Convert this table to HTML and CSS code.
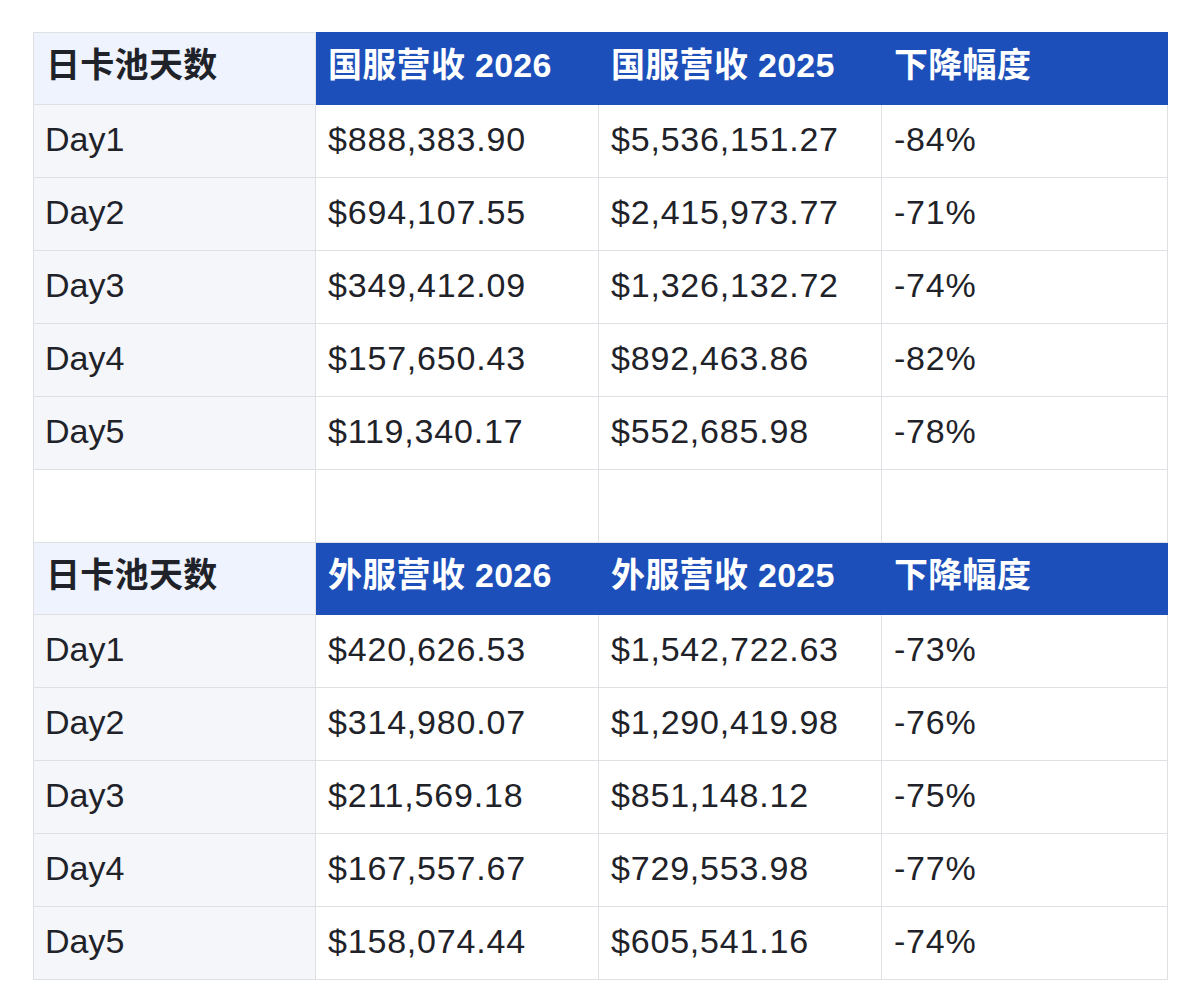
FILE: index.html
```html
<!DOCTYPE html>
<html lang="zh-CN">
<head>
<meta charset="utf-8">
<title>日卡池营收对比</title>
<link rel="stylesheet" href="styles.css">
</head>
<body>
<div class="page">
<table class="rev">
  <colgroup>
    <col class="c1"><col class="c2"><col class="c3"><col class="c4">
  </colgroup>
  <tbody>
    <tr class="head">
      <th class="first">日卡池天数</th><th>国服营收 2026</th><th>国服营收 2025</th><th>下降幅度</th>
    </tr>
    <tr><td class="first">Day1</td><td>$888,383.90</td><td>$5,536,151.27</td><td>-84%</td></tr>
    <tr><td class="first">Day2</td><td>$694,107.55</td><td>$2,415,973.77</td><td>-71%</td></tr>
    <tr><td class="first">Day3</td><td>$349,412.09</td><td>$1,326,132.72</td><td>-74%</td></tr>
    <tr><td class="first">Day4</td><td>$157,650.43</td><td>$892,463.86</td><td>-82%</td></tr>
    <tr><td class="first">Day5</td><td>$119,340.17</td><td>$552,685.98</td><td>-78%</td></tr>
    <tr class="spacer"><td></td><td></td><td></td><td></td></tr>
    <tr class="head">
      <th class="first">日卡池天数</th><th>外服营收 2026</th><th>外服营收 2025</th><th>下降幅度</th>
    </tr>
    <tr><td class="first">Day1</td><td>$420,626.53</td><td>$1,542,722.63</td><td>-73%</td></tr>
    <tr><td class="first">Day2</td><td>$314,980.07</td><td>$1,290,419.98</td><td>-76%</td></tr>
    <tr><td class="first">Day3</td><td>$211,569.18</td><td>$851,148.12</td><td>-75%</td></tr>
    <tr><td class="first">Day4</td><td>$167,557.67</td><td>$729,553.98</td><td>-77%</td></tr>
    <tr><td class="first">Day5</td><td>$158,074.44</td><td>$605,541.16</td><td>-74%</td></tr>
  </tbody>
</table>
</div>
</body>
</html>
```

FILE: styles.css
```css
html, body {
  margin: 0;
  padding: 0;
  background: #ffffff;
}

.page {
  padding: 32px 0 0 33px;
}

.rev {
  border-collapse: collapse;
  table-layout: fixed;
  width: 1134px;
  font-family: "Liberation Sans", "Noto Sans CJK SC", sans-serif;
  font-size: 34px;
  line-height: 40px;
  color: #1f2329;
}

.rev .c1 { width: 282px; }
.rev .c2 { width: 283px; }
.rev .c3 { width: 283px; }
.rev .c4 { width: 286px; }

.rev th,
.rev td {
  border: 1px solid #dee0e3;
  padding: 0 12px 5px 12px;
  text-align: left;
  vertical-align: middle;
  white-space: nowrap;
  letter-spacing: 0.8px;
}

.rev td.first {
  padding-left: 11px;
  letter-spacing: 0;
  background: #f5f6f9;
}

.rev tr { height: 73px; }
.rev tr.head { height: 72px; }

.rev th {
  background: #1c4fba;
  color: #ffffff;
  font-weight: bold;
  border-color: #1c4fba;
  padding-bottom: 8px;
  letter-spacing: 0.3px;
}

.rev th.first {
  background: #eef3fd;
  color: #1f2329;
  border-color: #dee0e3;
}

.rev tr.spacer td {
  background: #ffffff;
}
```
